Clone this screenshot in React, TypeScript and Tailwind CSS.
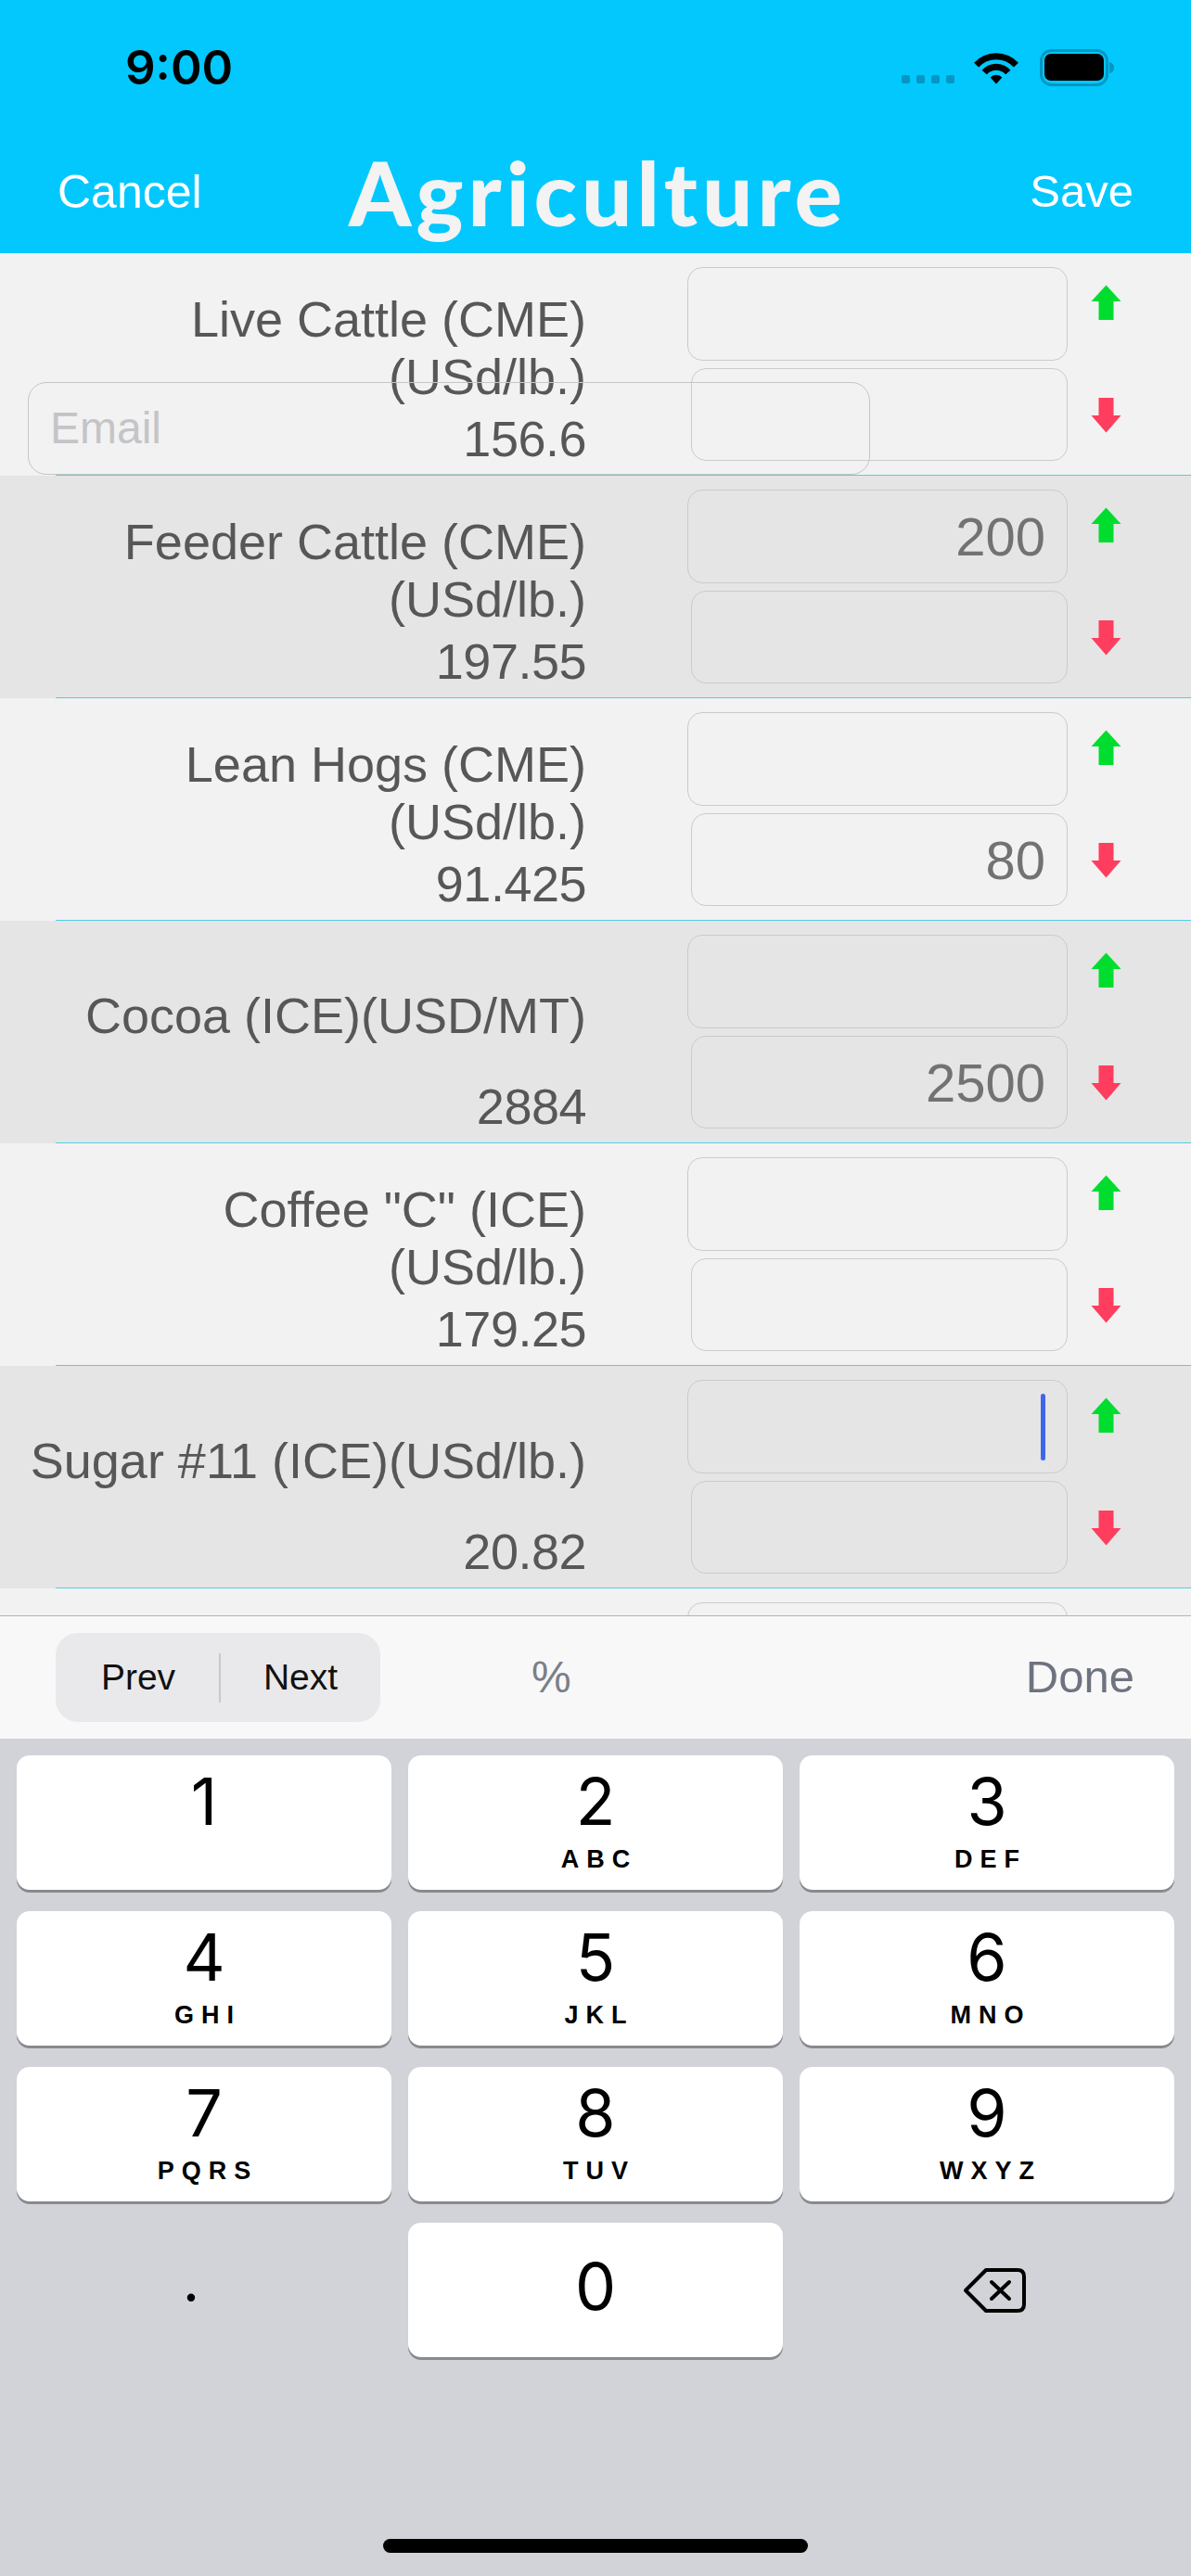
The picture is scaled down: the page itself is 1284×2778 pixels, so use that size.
import React from "react";

interface Row {
	title: string[]
	price: string
	up: string
	down: string
	cursor?: boolean
}

const rows: Row[] = [
	{ title: ["Live Cattle (CME)", "(USd/lb.)"], price: "156.6", up: "", down: "" },
	{ title: ["Feeder Cattle (CME)", "(USd/lb.)"], price: "197.55", up: "200", down: "" },
	{ title: ["Lean Hogs (CME)", "(USd/lb.)"], price: "91.425", up: "", down: "80" },
	{ title: ["Cocoa (ICE)(USD/MT)"], price: "2884", up: "", down: "2500" },
	{ title: ['Coffee "C" (ICE)', "(USd/lb.)"], price: "179.25", up: "", down: "" },
	{ title: ["Sugar #11 (ICE)(USd/lb.)"], price: "20.82", up: "", down: "", cursor: true },
	{ title: [], price: "", up: "", down: "" },
];

const keys = [
	{ n: "1", l: "" },
	{ n: "2", l: "ABC" },
	{ n: "3", l: "DEF" },
	{ n: "4", l: "GHI" },
	{ n: "5", l: "JKL" },
	{ n: "6", l: "MNO" },
	{ n: "7", l: "PQRS" },
	{ n: "8", l: "TUV" },
	{ n: "9", l: "WXYZ" },
];

function UpArrow() {
	return (
		<svg width="33" height="38" viewBox="0 0 33 38">
			<path d="M16.5 0.5 L32.5 18 L24.5 18 L24.5 38 L8.5 38 L8.5 18 L0.5 18 Z" fill="#00dd2e" strokeLinejoin="round" />
		</svg>
	)
}

function DownArrow() {
	return (
		<svg width="33" height="38" viewBox="0 0 33 38">
			<path d="M8.5 0 L24.5 0 L24.5 19 L32.5 19 L16.5 37.5 L0.5 19 L8.5 19 Z" fill="#ff3d5e" />
		</svg>
	)
}

function Field({ value, cursor, className }: { value: string, cursor?: boolean, className: string }) {
	return (
		<div className={`flex items-center justify-end rounded-[16px] border border-[#cbcbcb] pr-[23px] text-[58px] text-[#727272] ${className}`}>
			{value}
			{cursor && <div className="w-[5px] h-[72px] rounded-full bg-[#3f67ea]" />}
		</div>
	)
}

function Wifi() {
	return (
		<svg width="52" height="37" viewBox="0 0 52 37">
			<path d="M4.6 15.2 A29 29 0 0 1 47.4 15.2" fill="none" stroke="#000" strokeWidth="7" />
			<path d="M13.2 23 A17 17 0 0 1 38.8 23" fill="none" stroke="#000" strokeWidth="7" />
			<path d="M26 35.5 L19.6 28.6 A8.5 8.5 0 0 1 32.4 28.6 Z" fill="#000" />
		</svg>
	)
}

function Battery() {
	return (
		<svg width="81" height="40" viewBox="0 0 81 40">
			<rect x="1.5" y="1.5" width="71" height="37" rx="11" fill="none" stroke="#0597c2" strokeWidth="3" />
			<rect x="5" y="5" width="64" height="29" rx="7" fill="#000" />
			<path d="M75 14 Q80 15 80 20 Q80 25 75 26 Z" fill="#0597c2" />
		</svg>
	)
}

function Backspace() {
	return (
		<svg width="68" height="48" viewBox="0 0 68 48">
			<path d="M25 2 L59 2 Q66 2 66 9 L66 39 Q66 46 59 46 L25 46 L3 24 Z" fill="none" stroke="#000" strokeWidth="4" strokeLinejoin="round" />
			<path d="M31 15 L50 33 M50 15 L31 33" fill="none" stroke="#000" strokeWidth="4" strokeLinecap="round" />
		</svg>
	)
}

export default function App() {
	return (
		<div className="w-[1284px] h-[2778px] overflow-hidden flex flex-col font-['Liberation_Sans',Arial,sans-serif] bg-[#f2f2f2]">
			{/* header */}
			<div className="h-[273px] bg-[#02c8fe] flex flex-col">
				<div className="h-[146px] flex items-center justify-between pl-[135px] pr-[82px]">
					<div className="font-['Inter',sans-serif] font-semibold text-[51px] text-black">9:00</div>
					<div className="flex items-center">
						<div className="h-[36px] flex items-end gap-[7px] pb-[1px]">
							<div className="w-[9px] h-[9px] rounded-[2px] bg-[#0597c2]" />
							<div className="w-[9px] h-[9px] rounded-[2px] bg-[#0597c2]" />
							<div className="w-[9px] h-[9px] rounded-[2px] bg-[#0597c2]" />
							<div className="w-[9px] h-[9px] rounded-[2px] bg-[#0597c2]" />
						</div>
						<div className="ml-[19px]"><Wifi /></div>
						<div className="ml-[21px]"><Battery /></div>
					</div>
				</div>
				<div className="h-[127px] pb-[5px] grid grid-cols-[1fr_auto_1fr] items-center px-[62px]">
					<div className="text-white text-[50px]">Cancel</div>
					<div className="font-['Lato',sans-serif] font-black text-[96px] leading-none text-[#f3f3f3] tracking-[5px] pl-[5px]">Agriculture</div>
					<div className="text-white text-[49px] text-right">Save</div>
				</div>
			</div>

			{/* list */}
			<div className="relative h-[1469px] overflow-hidden">
				{rows.map((r, i) => (
					<div key={i} className={`flex flex-col ${i % 2 ? "bg-[#e5e5e5]" : "bg-[#f2f2f2]"}`}>
						<div className="flex h-[239px]">
							<div className="w-[632px] pl-[20px] pt-[22px] flex flex-col text-right text-[54px] text-[#575757]">
								<div className="h-[160px] flex flex-col justify-center leading-[62px]">
									{r.title.map((t) => <div key={t}>{t}</div>)}
								</div>
								<div className="h-[36px] leading-[36px] tracking-[-0.5px]">{r.price}</div>
							</div>
							<div className="ml-[109px] w-[410px] flex flex-col">
								<Field value={r.up} cursor={r.cursor} className="mt-[15px] h-[101px]" />
								<Field value={r.down} className="mt-[8px] ml-[4px] h-[100px]" />
							</div>
							<div className="ml-[25px] pt-[34px] flex flex-col">
								<UpArrow />
								<div className="mt-[84px]"><DownArrow /></div>
							</div>
						</div>
						<div className="ml-[60px] h-px bg-[#55cde4]" />
					</div>
				))}
				<div className="absolute left-[30px] top-[139px] w-[908px] h-[100px] rounded-[20px] border border-[#c6c6c6] flex items-center pl-[23px] text-[48px] text-[#c4c4c8]">
					Email
				</div>
			</div>

			{/* toolbar */}
			<div className="h-[133px] border-t border-[#b3b3b3] bg-[#f8f8f8] flex items-center pl-[60px] pr-[61px]">
				<div className="w-[350px] h-[96px] rounded-[24px] bg-[#e9e9eb] flex items-center text-[39px] text-[#111]">
					<div className="w-[176px] text-center pl-[2px]">Prev</div>
					<div className="w-[2px] h-[53px] bg-[#c9c9cb]" />
					<div className="flex-1 text-center">Next</div>
				</div>
				<div className="ml-[163px] text-[48px] text-[#7b7f88]">%</div>
				<div className="ml-auto text-[49px] text-[#6e7380]">Done</div>
			</div>

			{/* keyboard */}
			<div className="flex-1 bg-[#d1d3d9] flex flex-col px-[18px] pt-[18px]">
				<div className="grid grid-cols-3 gap-x-[18px] gap-y-[23px]">
					{keys.map((k) => (
						<div key={k.n} className="h-[145px] bg-white rounded-[14px] shadow-[0_3px_0_#898a8e] flex flex-col items-center pt-[20px]">
							<div className="font-['Inter',sans-serif] text-[70px] leading-[60px] text-black">{k.n}</div>
							<div className="mt-[17px] font-bold text-[27px] leading-[30px] tracking-[8px] pl-[8px] text-black">{k.l}</div>
						</div>
					))}
					<div className="h-[145px] flex justify-center pt-[30px] pr-[28px]">
						<div className="font-['Inter',sans-serif] text-[64px] leading-none text-black">.</div>
					</div>
					<div className="h-[145px] bg-white rounded-[14px] shadow-[0_3px_0_#898a8e] flex items-center justify-center pb-[7px]">
						<div className="font-['Inter',sans-serif] text-[70px] leading-[60px] text-black">0</div>
					</div>
					<div className="h-[145px] flex items-center justify-center pl-[16px]">
						<Backspace />
					</div>
				</div>
				<div className="mt-auto mb-[25px] self-center w-[458px] h-[15px] rounded-full bg-black" />
			</div>
		</div>
	)
}
